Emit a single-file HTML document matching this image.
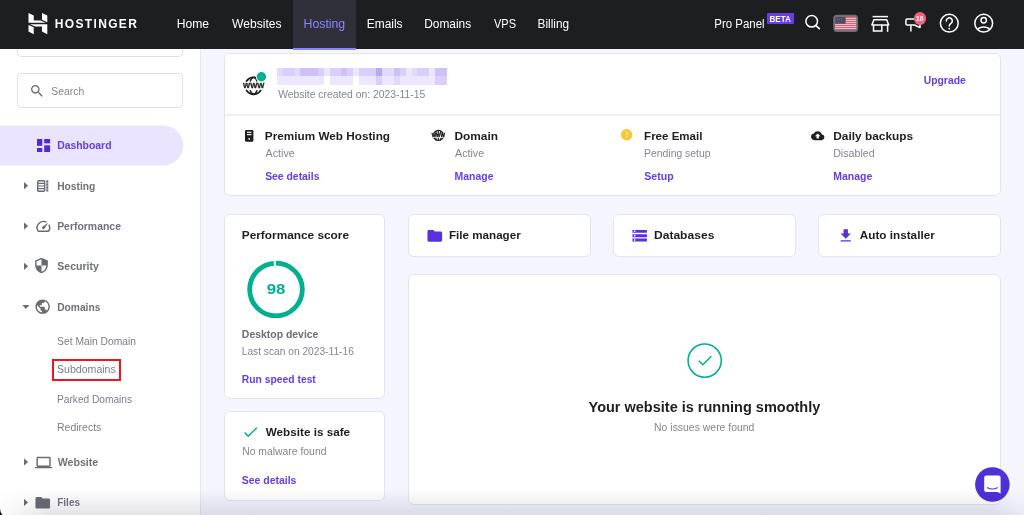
<!DOCTYPE html>
<html lang="en">
<head>
<meta charset="utf-8">
<title>Hostinger hPanel</title>
<style>
*{box-sizing:border-box;margin:0;padding:0}
html,body{width:1024px;height:515px;overflow:hidden}
body{position:relative;background:#f4f5ff;font-family:"Liberation Sans",Arial,sans-serif;color:#1d1e20}
.abs{position:absolute}
svg{position:absolute;overflow:visible}
.t{position:absolute;white-space:nowrap;transform-origin:0 0}
#hdr{position:absolute;left:0;top:0;width:1024px;height:49.2px;background:#1d1e20}
#tab{position:absolute;left:293px;top:0;width:63px;height:47.9px;background:#2f3039}#tabl{position:absolute;left:293px;top:47.9px;width:63px;height:1.9px;background:#8c85ff}
#side{position:absolute;left:0;top:48px;width:200.5px;height:467px;background:#fff;border-right:1px solid #e6e7f2}
.arr{position:absolute;left:23.900px;width:0;height:0;border-left:4.500px solid #696b75;border-top:3.900px solid transparent;border-bottom:3.900px solid transparent}
.card{position:absolute;background:#fff;border:1px solid #e3e4ee;border-radius:6px}
</style>
</head>
<body>
<div id="page" style="position:absolute;left:0;top:0;width:1024px;height:515px;will-change:transform">

<!-- ================= SIDEBAR ================= -->
<div id="side"></div>
<div class="abs" style="left:17px;top:38px;width:166.300px;height:18.500px;border:1px solid #dfe0e7;border-radius:4px;background:#fff"></div>
<div class="abs" style="left:17px;top:73px;width:166.300px;height:35px;border:1px solid #dfe0e7;border-radius:4px;background:#fff"></div>
<svg style="left:29px;top:82.5px" width="16" height="16" viewBox="0 0 24 24" fill="#696b75"><path d="M15.5 14h-.79l-.28-.27C15.41 12.59 16 11.11 16 9.5 16 5.91 13.09 3 9.500 3S3 5.910 3 9.500 5.910 16 9.500 16c1.610 0 3.090-.59 4.230-1.570l.27.28v.79l5 4.990L20.490 19l-4.990-5zm-6 0C7.010 14 5 11.990 5 9.500S7.010 5 9.500 5 14 7.010 14 9.500 11.990 14 9.500 14z"/></svg>

<svg style="left:0;top:120px" width="190" height="50" viewBox="0 120 190 50"><path d="M0 125.500H163.300a20 20 0 0 1 0 40H0Z" fill="#ebe4ff"/></svg>
<!-- sidebar arrows -->
<svg style="left:0;top:0" width="40" height="515" viewBox="0 0 40 515" fill="#696b75"><path d="M24 182.05L28.100 185.65L24 189.25Z"/><path d="M24 222.40L28.100 226.00L24 229.60Z"/><path d="M24 262.70L28.100 266.30L24 269.90Z"/><path d="M24 458.40L28.100 462.00L24 465.60Z"/><path d="M24 498.80L28.100 502.40L24 506.00Z"/><path d="M22.400 304.900H29.400L25.900 309.100Z"/></svg>
<!-- dashboard icon -->
<svg style="left:36.8px;top:139px" width="13.1" height="13" viewBox="0 0 13.1 13" fill="#5228d8"><rect x="0" y="0" width="5.3" height="6.8"/><rect x="7.2" y="0" width="5.9" height="4.3"/><rect x="0" y="9" width="5.3" height="4"/><rect x="7.2" y="6.3" width="5.9" height="6.7"/></svg>

<!-- hosting icon -->
<svg style="left:37.200px;top:179.900px" width="11.600" height="11.900" viewBox="0 0 11.600 11.900" fill="none" stroke="#696b75"><rect x=".7" y=".7" width="7" height="10.500" rx="1" stroke-width="1.400"/><path d="M1 3.400h6.400M1 6h6.400M1 8.600h6.400" stroke-width="1.200"/><path d="M10.300.3v11.300" stroke-width="2" stroke-dasharray="2.400 .6"/></svg>

<!-- performance icon -->
<svg style="left:34.600px;top:218px" width="16.800" height="16.800" viewBox="0 0 24 24" fill="#696b75"><path d="M20.380 8.570l-1.230 1.850a8 8 0 0 1-.22 7.580H5.070A8 8 0 0 1 15.580 6.850l1.850-1.230A10 10 0 0 0 3.350 19a2 2 0 0 0 1.720 1h13.850a2 2 0 0 0 1.740-1 10 10 0 0 0-.27-10.440zm-9.790 6.840a2 2 0 0 0 2.830 0l5.660-8.490-8.490 5.660a2 2 0 0 0 0 2.830z"/></svg>

<!-- security icon -->
<svg style="left:32.500px;top:257.300px" width="17" height="17" viewBox="0 0 24 24" fill="#696b75"><path d="M12 1L3 5v6c0 5.550 3.840 10.740 9 12 5.160-1.260 9-6.450 9-12V5l-9-4zm0 10.990h7c-.53 4.120-3.280 7.790-7 8.940V12H5V6.300l7-3.110v8.800z"/></svg>

<!-- domains globe -->
<svg style="left:34.300px;top:298px" width="17.300" height="17.300" viewBox="0 0 24 24" fill="#696b75"><path d="M12 2C6.480 2 2 6.480 2 12s4.480 10 10 10 10-4.480 10-10S17.520 2 12 2zm-1 17.930c-3.950-.49-7-3.850-7-7.930 0-.62.080-1.210.21-1.790L9 15v1c0 1.100.9 2 2 2v1.930zm6.900-2.540c-.26-.81-1-1.390-1.900-1.390h-1v-3c0-.55-.45-1-1-1H8v-2h2c.55 0 1-.45 1-1V7h2c1.100 0 2-.9 2-2v-.41c2.930 1.190 5 4.060 5 7.410 0 2.080-.8 3.970-2.100 5.390z"/></svg>

<div class="abs" style="left:52.300px;top:359.300px;width:68.400px;height:21.600px;border:2px solid #f0141e"></div>

<!-- website laptop -->
<svg style="left:34.600px;top:453.600px" width="17.200" height="17.200" viewBox="0 0 24 24" fill="#696b75"><path d="M20 18c1.100 0 1.990-.9 1.990-2L22 6c0-1.100-.9-2-2-2H4c-1.100 0-2 .9-2 2v10c0 1.100.9 2 2 2H0v2h24v-2h-4zM4 6h16v10H4V6z"/></svg>

<!-- files folder -->
<svg style="left:34.300px;top:493.500px" width="17.500" height="17.500" viewBox="0 0 24 24" fill="#696b75"><path d="M10 4H4c-1.100 0-1.990.9-1.990 2L2 18c0 1.100.9 2 2 2h16c1.100 0 2-.9 2-2V8c0-1.100-.9-2-2-2h-8l-2-2z"/></svg>

<!-- ================= MAIN ================= -->
<div class="card" style="left:224px;top:53px;width:777px;height:143px"></div>
<div class="abs" style="left:225px;top:114px;width:775px;height:2px;background:#eeeef4"></div>

<!-- www globe icon -->
<svg style="left:242px;top:74px" width="26" height="24" viewBox="242 74 26 24">
  <g fill="none" stroke="#1d1e20" stroke-width="1.800" stroke-linecap="round">
    <path d="M246.600 81.100A8.400 8.400 0 0 1 260.600 81.100"/>
    <path d="M246.600 90.500A8.400 8.400 0 0 0 260.600 90.500"/>
    <path d="M250.300 80.900q.8-2.300 2.600-3.500M256.900 80.900q-.8-2.300-2.600-3.500M250.300 90.700q.8 2.300 2.600 3.500M256.900 90.700q-.8 2.300-2.600 3.500" stroke-width="1.500"/>
  </g>
  <circle cx="261.400" cy="76.700" r="5.600" fill="#fff"/>
  <circle cx="261.400" cy="76.700" r="4.700" fill="#00b090"/>
</svg>

<!-- blurred domain mosaic -->
<svg id="mosaic" style="left:276.700px;top:68.200px" width="169.600" height="16.700" viewBox="0 0 29 2" preserveAspectRatio="none" shape-rendering="crispEdges"><rect x="0" y="0" width="1" height="1" fill="#e2dafb"/><rect x="0" y="1" width="1" height="1" fill="#ece7fc"/><rect x="1" y="0" width="1" height="1" fill="#d9cffa"/><rect x="1" y="1" width="1" height="1" fill="#ece7fc"/><rect x="2" y="0" width="1" height="1" fill="#d9cffa"/><rect x="2" y="1" width="1" height="1" fill="#ece7fc"/><rect x="3" y="0" width="1" height="1" fill="#e2dafb"/><rect x="3" y="1" width="1" height="1" fill="#ece7fc"/><rect x="4" y="0" width="1" height="1" fill="#cec1f7"/><rect x="4" y="1" width="1" height="1" fill="#ece7fc"/><rect x="5" y="0" width="1" height="1" fill="#cec1f7"/><rect x="5" y="1" width="1" height="1" fill="#ece7fc"/><rect x="6" y="0" width="1" height="1" fill="#cec1f7"/><rect x="6" y="1" width="1" height="1" fill="#ece7fc"/><rect x="7" y="0" width="1" height="1" fill="#d9cffa"/><rect x="7" y="1" width="1" height="1" fill="#ece7fc"/><rect x="8" y="0" width="1" height="1" fill="#ece7fc"/><rect x="9" y="0" width="1" height="1" fill="#d9cffa"/><rect x="9" y="1" width="1" height="1" fill="#ece7fc"/><rect x="10" y="0" width="1" height="1" fill="#d9cffa"/><rect x="10" y="1" width="1" height="1" fill="#ece7fc"/><rect x="11" y="0" width="1" height="1" fill="#cec1f7"/><rect x="11" y="1" width="1" height="1" fill="#ece7fc"/><rect x="12" y="0" width="1" height="1" fill="#d9cffa"/><rect x="12" y="1" width="1" height="1" fill="#ece7fc"/><rect x="13" y="0" width="1" height="1" fill="#ece7fc"/><rect x="14" y="0" width="1" height="1" fill="#d9cffa"/><rect x="14" y="1" width="1" height="1" fill="#ece7fc"/><rect x="15" y="0" width="1" height="1" fill="#d9cffa"/><rect x="15" y="1" width="1" height="1" fill="#ece7fc"/><rect x="16" y="0" width="1" height="1" fill="#d9cffa"/><rect x="16" y="1" width="1" height="1" fill="#ece7fc"/><rect x="17" y="0" width="1" height="1" fill="#b7a8f0"/><rect x="17" y="1" width="1" height="1" fill="#d9cffa"/><rect x="18" y="0" width="1" height="1" fill="#e2dafb"/><rect x="18" y="1" width="1" height="1" fill="#ece7fc"/><rect x="19" y="0" width="1" height="1" fill="#e2dafb"/><rect x="19" y="1" width="1" height="1" fill="#ece7fc"/><rect x="20" y="0" width="1" height="1" fill="#cec1f7"/><rect x="20" y="1" width="1" height="1" fill="#e2dafb"/><rect x="21" y="0" width="1" height="1" fill="#d9cffa"/><rect x="21" y="1" width="1" height="1" fill="#ece7fc"/><rect x="22" y="0" width="1" height="1" fill="#ece7fc"/><rect x="22" y="1" width="1" height="1" fill="#ece7fc"/><rect x="23" y="0" width="1" height="1" fill="#e2dafb"/><rect x="23" y="1" width="1" height="1" fill="#ece7fc"/><rect x="24" y="0" width="1" height="1" fill="#d9cffa"/><rect x="24" y="1" width="1" height="1" fill="#ece7fc"/><rect x="25" y="0" width="1" height="1" fill="#d9cffa"/><rect x="25" y="1" width="1" height="1" fill="#ece7fc"/><rect x="26" y="0" width="1" height="1" fill="#ece7fc"/><rect x="26" y="1" width="1" height="1" fill="#ece7fc"/><rect x="27" y="0" width="1" height="1" fill="#cec1f7"/><rect x="27" y="1" width="1" height="1" fill="#d9cffa"/><rect x="28" y="0" width="1" height="1" fill="#cec1f7"/><rect x="28" y="1" width="1" height="1" fill="#d9cffa"/></svg>

<!-- row icons -->
<svg style="left:244.600px;top:129.700px" width="8.400" height="11.700" viewBox="0 0 8.400 11.700"><rect width="8.400" height="11.700" rx="1.200" fill="#1d1e20"/><rect x="2" y="1.700" width="4.400" height="1.200" fill="#fff"/><rect x="2" y="4" width="4.400" height="1.200" fill="#fff"/><circle cx="4.200" cy="8.800" r=".9" fill="#fff"/></svg>

<svg style="left:431px;top:129px" width="15" height="13" viewBox="431 129 15 13">
  <circle cx="438.400" cy="135.400" r="5" fill="none" stroke="#1d1e20" stroke-width="1.300"/>
  <path d="M438.400 130.200v10.600M436.300 130.800q-1.500 4.700 0 9.400M440.500 130.800q1.500 4.700 0 9.400" fill="none" stroke="#1d1e20" stroke-width="1.100"/>
  <rect x="431.500" y="133.100" width="14" height="4.700" fill="#fff"/>
</svg>

<svg style="left:620.700px;top:129px" width="11.400" height="11.400" viewBox="0 0 11.400 11.400"><circle cx="5.700" cy="5.700" r="5.700" fill="#fec62e"/><rect x="5.100" y="2.700" width="1.200" height="3.800" rx=".4" fill="#fff"/><circle cx="5.700" cy="8.100" r=".75" fill="#fff"/></svg>

<svg style="left:811px;top:129px" width="13.400" height="13.400" viewBox="0 0 24 24" fill="#1d1e20" preserveAspectRatio="none"><path d="M19.350 10.040C18.670 6.590 15.640 4 12 4 9.110 4 6.600 5.640 5.350 8.040 2.340 8.360 0 10.910 0 14c0 3.310 2.690 6 6 6h13c2.760 0 5-2.240 5-5 0-2.640-2.050-4.780-4.650-4.960zM14 13v4h-4v-4H7l5-5 5 5h-3z"/></svg>

<!-- performance card -->
<div class="card" style="left:224px;top:214px;width:161px;height:185px"></div>
<svg style="left:246px;top:259px" width="60" height="61" viewBox="-30 -30 60 61"><circle cy=".5" r="26.3" fill="none" stroke="#e6e7ea" stroke-width="4.400"/><circle r="26.3" fill="none" stroke="#00b090" stroke-width="4.800" stroke-dasharray="161.85 3.4" transform="translate(0 .5) rotate(-90)"/></svg>

<!-- safe card -->
<div class="card" style="left:224px;top:411px;width:161px;height:89.500px"></div>
<svg style="left:244.300px;top:427px" width="13.500" height="10" viewBox="0 0 13.500 10"><path d="M.7 5.600L4.300 9.200L12.800.7" fill="none" stroke="#00b090" stroke-width="1.500"/></svg>

<!-- tool cards -->
<div class="card" style="left:408px;top:214px;width:183px;height:42.600px"></div>
<svg style="left:425.800px;top:226.500px" width="17.600" height="17.600" viewBox="0 0 24 24" fill="#5a2fde"><path d="M10 4H4c-1.100 0-1.990.9-1.990 2L2 18c0 1.100.9 2 2 2h16c1.100 0 2-.9 2-2V8c0-1.100-.9-2-2-2h-8l-2-2z"/></svg>

<div class="card" style="left:613px;top:214px;width:183px;height:42.600px"></div>
<svg style="left:631.200px;top:226.900px" width="17.400" height="17.400" viewBox="0 0 24 24" fill="#5a2fde"><path d="M2 20h20v-4H2v4zm2-3h2v2H4v-2zM2 4v4h20V4H2zm4 3H4V5h2v2zm-4 7h20v-4H2v4zm2-3h2v2H4v-2z"/></svg>

<div class="card" style="left:818px;top:214px;width:183px;height:42.600px"></div>
<svg style="left:836.800px;top:226.500px" width="17.500" height="17.500" viewBox="0 0 24 24" fill="#5a2fde"><path d="M19 9h-4V3H9v6H5l7 7 7-7zM5 18v2h14v-2H5z"/></svg>

<!-- big card -->
<div class="card" style="left:408px;top:273.500px;width:593px;height:231.500px"></div>
<svg style="left:686px;top:342px" width="38" height="38" viewBox="-19 -19 38 38"><circle cx="-.3" cy="-.4" r="16.600" fill="none" stroke="#00b090" stroke-width="1.600"/><path d="M-6.200 -.3L-2.200 3.700L6.300 -4.800" fill="none" stroke="#00b090" stroke-width="1.600"/></svg>

<!-- chat button -->
<svg style="left:975px;top:467px" width="35" height="35" viewBox="0 0 35 35"><circle cx="17.400" cy="17.500" r="17.300" fill="#5030d8"/><path d="M11.200 8.500h12.400a2 2 0 0 1 2 2v16.200c-1.300-1.200-2.800-1.800-4.600-1.800h-9.800a2 2 0 0 1-2-2v-12.400a2 2 0 0 1 2-2z" fill="#fff"/><path d="M12.400 20.700q5 2.700 10 0" fill="none" stroke="#5030d8" stroke-width="1.100" stroke-linecap="round"/></svg>

<!-- bottom shade -->
<div class="abs" style="left:0;top:489px;width:1024px;height:26px;background:linear-gradient(to bottom,rgba(20,20,50,0) 0,rgba(20,20,50,.10) 88%,rgba(20,20,50,.11) 100%);-webkit-mask-image:linear-gradient(to right,rgba(0,0,0,.1) 0,#000 50px,#000 990px,rgba(0,0,0,.4) 1024px);mask-image:linear-gradient(to right,rgba(0,0,0,.1) 0,#000 50px,#000 990px,rgba(0,0,0,.4) 1024px);pointer-events:none"></div>
<svg style="left:0;top:503px" width="6" height="12" viewBox="0 0 6 12"><path d="M0 5C.2 8.300 1 10.500 2.700 12H0Z" fill="#111"/></svg>

<!-- ================= HEADER ================= -->
<div id="hdr"><div id="tab"></div><div id="tabl"></div></div>
<!-- logo -->
<svg style="left:0;top:0" width="60" height="49" viewBox="0 0 60 49" fill="#fff"><g transform="translate(28.500 12.900) scale(.9171 .8875)"><path d="M0 0L5.700 3V8.500H13.100L18.900 11.200H0Z"/><path d="M14.700 0L20.500 3V10.400L14.700 7.600Z"/><path d="M1.500 12.700H20.500V24L14.700 20.900V15.400H7.300Z"/><path d="M0 13.500L5.700 16.300V24L0 20.900Z"/></g></svg>

<!-- beta badge -->
<div class="abs" style="left:766.900px;top:13.300px;width:27.100px;height:10.500px;background:#673de6;border-radius:1px"></div>

<!-- header search + flag (page coordinates) -->
<svg style="left:0;top:0" width="1024" height="49" viewBox="0 0 1024 49">
  <circle cx="811.700" cy="21.300" r="5.800" fill="none" stroke="#fff" stroke-width="1.500"/>
  <path d="M815.900 25.600L819.300 28.700" stroke="#fff" stroke-width="1.600" stroke-linecap="round"/>
  <rect x="833.900" y="15.400" width="23.600" height="16.100" rx="3" fill="#77787f" stroke="#6b6d74" stroke-width="1.200"/>
  <rect x="835.200" y="16.9" width="21" height="1" fill="#ea536c"/><rect x="835.200" y="17.9" width="21" height="1" fill="#dcdce1"/><rect x="835.200" y="18.9" width="21" height="1" fill="#ea536c"/><rect x="835.200" y="19.9" width="21" height="1" fill="#dcdce1"/><rect x="835.200" y="20.9" width="21" height="1" fill="#ea536c"/><rect x="835.200" y="21.9" width="21" height="1" fill="#dcdce1"/><rect x="835.200" y="22.9" width="21" height="1" fill="#ea536c"/><rect x="835.200" y="23.9" width="21" height="1" fill="#dcdce1"/><rect x="835.200" y="24.9" width="21" height="1" fill="#ea536c"/><rect x="835.200" y="25.9" width="21" height="1" fill="#dcdce1"/><rect x="835.200" y="26.9" width="21" height="1" fill="#ea536c"/><rect x="835.200" y="27.9" width="21" height="1" fill="#dcdce1"/><rect x="835.200" y="28.9" width="21" height="1" fill="#ea536c"/>
  <rect x="835.200" y="16.900" width="10.400" height="6.800" fill="#4a4b57"/>
  <g fill="#7268ee"><circle cx="837.400" cy="19.400" r=".55"/><circle cx="839.500" cy="19.400" r=".55"/><circle cx="841.500" cy="18.400" r=".55"/><circle cx="841.500" cy="20.500" r=".55"/><circle cx="838.500" cy="22.300" r=".55"/></g>
</svg>

<!-- header icons (page coordinates) -->
<svg style="left:0;top:0" width="1024" height="49" viewBox="0 0 1024 49" fill="none" stroke="#fff" stroke-width="1.500">
  <!-- store -->
  <path d="M872.600 16.600H888"/>
  <path d="M873.900 19.800H886.700L888.700 24.900H871.900Z" stroke-linejoin="round"/>
  <path d="M873.500 25V31.100H881.800V25"/>
  <path d="M887.600 25V31.800"/>
  <!-- megaphone -->
  <path d="M907.200 18.900H914.500L920 18.900V27.600L914.500 25H907.200A1.300 1.300 0 0 1 905.900 23.700V20.200A1.300 1.300 0 0 1 907.200 18.900Z" stroke-linejoin="round"/>
  <path d="M910.900 25.200V31.500"/>
  <!-- help -->
  <circle cx="949.300" cy="23.200" r="8.900"/>
  <path d="M946.300 20.900a3 3 0 1 1 4.600 2.500c-1 .7-1.600 1.300-1.600 2.600" stroke-linecap="round"/>
  <circle cx="949.300" cy="28.600" r=".95" fill="#fff" stroke="none"/>
  <!-- account -->
  <circle cx="983.700" cy="23.200" r="8.900"/>
  <circle cx="983.700" cy="20.200" r="2.700"/>
  <path d="M977.600 29.500c2.800-3.300 9.400-3.300 12.200 0"/>
</svg>
<div class="abs" style="left:913.500px;top:12.400px;width:12.400px;height:12.400px;border-radius:50%;background:#f1607e"></div>

<!-- ================= TEXT ================= -->
<div class="t" style="left:0;top:0;transform:translate(916.08px,14.93px) scaleX(0.8913);font-size:7.5px;line-height:7.5px;color:#fff;font-weight:700;">16</div>
<div class="t" style="left:0;top:0;transform:translate(54.85px,17.82px);font-size:12px;line-height:12px;letter-spacing:1.333px;color:#fff;font-weight:700;">HOSTINGER</div>
<div class="t" style="left:0;top:0;transform:translate(176.65px,18.42px) scaleX(0.9699);font-size:12.5px;line-height:12.5px;color:#fff;">Home</div>
<div class="t" style="left:0;top:0;transform:translate(232.10px,18.42px) scaleX(0.9648);font-size:12.5px;line-height:12.5px;color:#fff;">Websites</div>
<div class="t" style="left:0;top:0;transform:translate(303.54px,18.42px) scaleX(0.9827);font-size:12.5px;line-height:12.5px;color:#8c85ff;">Hosting</div>
<div class="t" style="left:0;top:0;transform:translate(366.87px,18.42px) scaleX(0.9498);font-size:12.5px;line-height:12.5px;color:#fff;">Emails</div>
<div class="t" style="left:0;top:0;transform:translate(424.27px,18.42px) scaleX(0.9509);font-size:12.5px;line-height:12.5px;color:#fff;">Domains</div>
<div class="t" style="left:0;top:0;transform:translate(494.00px,18.42px) scaleX(0.8810);font-size:12.5px;line-height:12.5px;color:#fff;">VPS</div>
<div class="t" style="left:0;top:0;transform:translate(537.57px,18.42px) scaleX(0.9472);font-size:12.5px;line-height:12.5px;color:#fff;">Billing</div>
<div class="t" style="left:0;top:0;transform:translate(714.31px,18.37px) scaleX(0.9153);font-size:12.5px;line-height:12.5px;color:#fff;">Pro Panel</div>
<div class="t" style="left:0;top:0;transform:translate(769.50px,15.38px) scaleX(0.9260);font-size:8.7px;line-height:8.7px;color:#fff;font-weight:700;">BETA</div>
<div class="t" style="left:0;top:0;transform:translate(51.24px,86.47px) scaleX(0.9834);font-size:10.6px;line-height:10.6px;color:#848691;">Search</div>
<div class="t" style="left:0;top:0;transform:translate(57.15px,139.97px) scaleX(0.9829);font-size:10.6px;line-height:10.6px;color:#673de6;font-weight:700;">Dashboard</div>
<div class="t" style="left:0;top:0;transform:translate(57.16px,181.37px) scaleX(0.9656);font-size:10.6px;line-height:10.6px;color:#6e717c;font-weight:700;">Hosting</div>
<div class="t" style="left:0;top:0;transform:translate(57.15px,220.67px) scaleX(0.9847);font-size:10.6px;line-height:10.6px;color:#6e717c;font-weight:700;">Performance</div>
<div class="t" style="left:0;top:0;transform:translate(57.27px,261.07px) scaleX(0.9928);font-size:10.6px;line-height:10.6px;color:#6e717c;font-weight:700;">Security</div>
<div class="t" style="left:0;top:0;transform:translate(57.16px,302.37px) scaleX(0.9663);font-size:10.6px;line-height:10.6px;color:#6e717c;font-weight:700;">Domains</div>
<div class="t" style="left:0;top:0;transform:translate(57.09px,335.77px) scaleX(0.9716);font-size:10.6px;line-height:10.6px;color:#7b7e89;">Set Main Domain</div>
<div class="t" style="left:0;top:0;transform:translate(57.06px,364.27px) scaleX(0.9971);font-size:10.6px;line-height:10.6px;color:#7b7e89;">Subdomains</div>
<div class="t" style="left:0;top:0;transform:translate(57.01px,394.22px) scaleX(0.9586);font-size:10.6px;line-height:10.6px;color:#7b7e89;">Parked Domains</div>
<div class="t" style="left:0;top:0;transform:translate(56.98px,421.87px) scaleX(0.9906);font-size:10.6px;line-height:10.6px;color:#7b7e89;">Redirects</div>
<div class="t" style="left:0;top:0;transform:translate(57.80px,457.42px) scaleX(1.0003);font-size:10.6px;line-height:10.6px;color:#6e717c;font-weight:700;">Website</div>
<div class="t" style="left:0;top:0;transform:translate(57.17px,496.97px) scaleX(0.9496);font-size:10.6px;line-height:10.6px;color:#6e717c;font-weight:700;">Files</div>
<div class="t" style="left:0;top:0;transform:translate(243.10px,81.83px) scaleX(0.9363);font-size:8px;line-height:8px;color:#1d1e20;font-weight:700;-webkit-text-stroke:.35px #1d1e20;">WWW</div>
<div class="t" style="left:0;top:0;transform:translate(431.67px,132.99px) scale(0.4642,0.5000);font-size:10px;line-height:10px;color:#1d1e20;font-weight:700;-webkit-text-stroke:.9px #1d1e20;">WWW</div>
<div class="t" style="left:0;top:0;transform:translate(278.18px,88.82px) scaleX(0.9775);font-size:10.6px;line-height:10.6px;color:#848691;">Website created on: 2023-11-15</div>
<div class="t" style="left:0;top:0;transform:translate(923.71px,74.67px) scaleX(0.9781);font-size:10.6px;line-height:10.6px;color:#673de6;font-weight:700;">Upgrade</div>
<div class="t" style="left:0;top:0;transform:translate(264.87px,129.82px) scaleX(1.0134);font-size:11.6px;line-height:11.6px;color:#1d1e20;font-weight:700;">Premium Web Hosting</div>
<div class="t" style="left:0;top:0;transform:translate(265.60px,148.37px) scaleX(1.0115);font-size:10.6px;line-height:10.6px;color:#848691;">Active</div>
<div class="t" style="left:0;top:0;transform:translate(265.16px,171.27px) scaleX(0.9801);font-size:10.6px;line-height:10.6px;color:#673de6;font-weight:700;">See details</div>
<div class="t" style="left:0;top:0;transform:translate(454.46px,129.82px) scaleX(1.0248);font-size:11.6px;line-height:11.6px;color:#1d1e20;font-weight:700;">Domain</div>
<div class="t" style="left:0;top:0;transform:translate(455.00px,148.37px) scaleX(1.0115);font-size:10.6px;line-height:10.6px;color:#848691;">Active</div>
<div class="t" style="left:0;top:0;transform:translate(454.55px,171.27px) scaleX(0.9860);font-size:10.6px;line-height:10.6px;color:#673de6;font-weight:700;">Manage</div>
<div class="t" style="left:0;top:0;transform:translate(644.08px,129.82px) scaleX(0.9954);font-size:11.6px;line-height:11.6px;color:#1d1e20;font-weight:700;">Free Email</div>
<div class="t" style="left:0;top:0;transform:translate(643.99px,148.37px) scaleX(0.9832);font-size:10.6px;line-height:10.6px;color:#848691;">Pending setup</div>
<div class="t" style="left:0;top:0;transform:translate(644.27px,171.27px) scaleX(0.9985);font-size:10.6px;line-height:10.6px;color:#673de6;font-weight:700;">Setup</div>
<div class="t" style="left:0;top:0;transform:translate(833.26px,129.82px) scaleX(1.0245);font-size:11.6px;line-height:11.6px;color:#1d1e20;font-weight:700;">Daily backups</div>
<div class="t" style="left:0;top:0;transform:translate(833.17px,148.37px) scaleX(1.0045);font-size:10.6px;line-height:10.6px;color:#848691;">Disabled</div>
<div class="t" style="left:0;top:0;transform:translate(833.35px,171.27px) scaleX(0.9860);font-size:10.6px;line-height:10.6px;color:#673de6;font-weight:700;">Manage</div>
<div class="t" style="left:0;top:0;transform:translate(241.76px,229.42px) scaleX(1.0213);font-size:11.6px;line-height:11.6px;color:#1d1e20;font-weight:700;">Performance score</div>
<div class="t" style="left:0;top:0;transform:translate(266.77px,282.31px) scaleX(1.2008);font-size:14px;line-height:14px;color:#00b090;font-weight:700;">98</div>
<div class="t" style="left:0;top:0;transform:translate(241.85px,328.77px) scaleX(0.9852);font-size:10.6px;line-height:10.6px;color:#6c6e77;font-weight:700;">Desktop device</div>
<div class="t" style="left:0;top:0;transform:translate(241.70px,345.77px) scaleX(0.9633);font-size:10.6px;line-height:10.6px;color:#848691;">Last scan on 2023-11-16</div>
<div class="t" style="left:0;top:0;transform:translate(241.85px,374.27px) scaleX(0.9739);font-size:10.6px;line-height:10.6px;color:#673de6;font-weight:700;">Run speed test</div>
<div class="t" style="left:0;top:0;transform:translate(265.80px,426.37px) scaleX(1.0082);font-size:11.6px;line-height:11.6px;color:#1d1e20;font-weight:700;">Website is safe</div>
<div class="t" style="left:0;top:0;transform:translate(242.19px,445.72px) scaleX(0.9799);font-size:10.6px;line-height:10.6px;color:#848691;">No malware found</div>
<div class="t" style="left:0;top:0;transform:translate(241.79px,475.32px) scaleX(0.9870);font-size:10.6px;line-height:10.6px;color:#673de6;font-weight:700;">See details</div>
<div class="t" style="left:0;top:0;transform:translate(448.97px,229.17px) scaleX(1.0032);font-size:11.6px;line-height:11.6px;color:#1d1e20;font-weight:700;">File manager</div>
<div class="t" style="left:0;top:0;transform:translate(653.94px,229.07px) scaleX(1.0415);font-size:11.6px;line-height:11.6px;color:#1d1e20;font-weight:700;">Databases</div>
<div class="t" style="left:0;top:0;transform:translate(859.82px,229.07px) scaleX(1.0112);font-size:11.6px;line-height:11.6px;color:#1d1e20;font-weight:700;">Auto installer</div>
<div class="t" style="left:0;top:0;transform:translate(588.54px,398.86px) scaleX(0.9667);font-size:15px;line-height:15px;color:#1d1e20;font-weight:700;">Your website is running smoothly</div>
<div class="t" style="left:0;top:0;transform:translate(654.08px,422.22px) scaleX(0.9850);font-size:10.6px;line-height:10.6px;color:#848691;">No issues were found</div>

</div>
</body>
</html>
